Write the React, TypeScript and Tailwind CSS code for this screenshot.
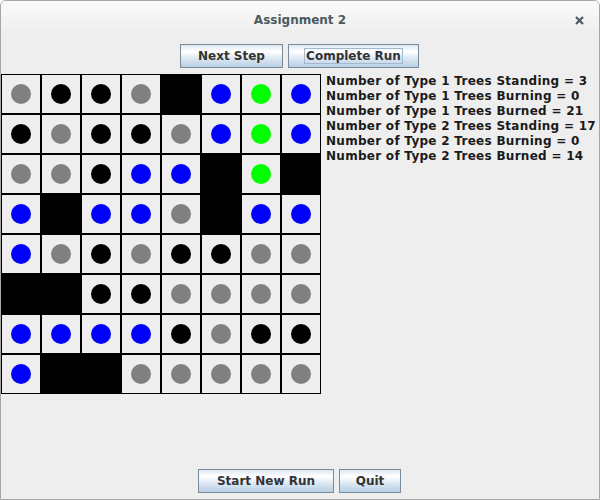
import React from 'react';

// a = gray tree, k = black tree, b = blue tree, n = green tree, # = burned-out cell
const rows: string[] = [
  'akka#bnb',
  'kakkabnb',
  'aakbb#n#',
  'b#bba#bb',
  'bakakkaa',
  '##kkaaaa',
  'bbbbkakk',
  'b##aaaaa',
];

const dotColor: Record<string, string> = {
  a: 'bg-[#808080]',
  k: 'bg-black',
  b: 'bg-[#0000ff]',
  n: 'bg-[#00ff00]',
};

const stats = [
  'Number of Type 1 Trees Standing = 3',
  'Number of Type 1 Trees Burning = 0',
  'Number of Type 1 Trees Burned = 21',
  'Number of Type 2 Trees Standing = 17',
  'Number of Type 2 Trees Burning = 0',
  'Number of Type 2 Trees Burned = 14',
];

const Button: React.FC<{ label: string; width: string; focused?: boolean }> = ({ label, width, focused }) => (
  <button
    className={`relative h-[24px] ${width} border border-[#7a8a99] bg-[linear-gradient(#dde8f3_0%,#ffffff_30%,#dde8f3_60%,#b8cfe5_100%)] text-[12px] font-bold text-[#333333] flex items-center justify-center`}
  >
    {focused && <span className="absolute left-[15px] right-[15px] top-[3px] bottom-[3px] border border-[#a3b8cc]" />}
    <span className="relative">{label}</span>
  </button>
);

export default function App() {
  return (
    <div className="w-[600px] h-[500px] border border-[#a6a6a6] rounded-t-[6px] bg-[#eeeeee] flex flex-col font-['DejaVu_Sans',sans-serif] overflow-hidden">
      {/* Title bar */}
      <div className="relative h-[37px] shrink-0 bg-[linear-gradient(#fafafa,#ededed)] flex items-center justify-center">
        <span className="text-[12px] font-bold text-[#4b5960]">Assignment 2</span>
        <svg className="absolute right-[15px] top-[15px]" width="9" height="9" viewBox="0 0 9 9">
          <path d="M1 1 L8 8 M8 1 L1 8" stroke="#4b5960" strokeWidth="2.2" />
        </svg>
      </div>

      {/* Top controls */}
      <div className="flex justify-center gap-[5px] pt-[6px] pr-[1px]">
        <Button label="Next Step" width="w-[103px]" />
        <Button label="Complete Run" width="w-[131px]" focused />
      </div>

      {/* Forest + counts */}
      <div className="flex mt-[6px]">
        <div className="grid grid-cols-8 w-[320px]">
          {rows.map((row, r) =>
            row.split('').map((c, i) => (
              <div
                key={`${r}-${i}`}
                className={`w-[40px] h-[40px] border border-black flex items-center justify-center ${c === '#' ? 'bg-black' : 'bg-[#eeeeee]'}`}
              >
                {c !== '#' && <div className={`w-[20px] h-[20px] rounded-full ${dotColor[c]}`} />}
              </div>
            )),
          )}
        </div>
        <div className="ml-[5px] text-[12px] leading-[15px] font-bold text-[#1a1a1a] tracking-[0.28px]">
          {stats.map((s) => (
            <div key={s}>{s}</div>
          ))}
        </div>
      </div>

      {/* Bottom controls */}
      <div className="mt-auto flex justify-center gap-[5px] pb-[6px] pr-[1px]">
        <Button label="Start New Run" width="w-[136px]" />
        <Button label="Quit" width="w-[62px]" />
      </div>
    </div>
  );
}
